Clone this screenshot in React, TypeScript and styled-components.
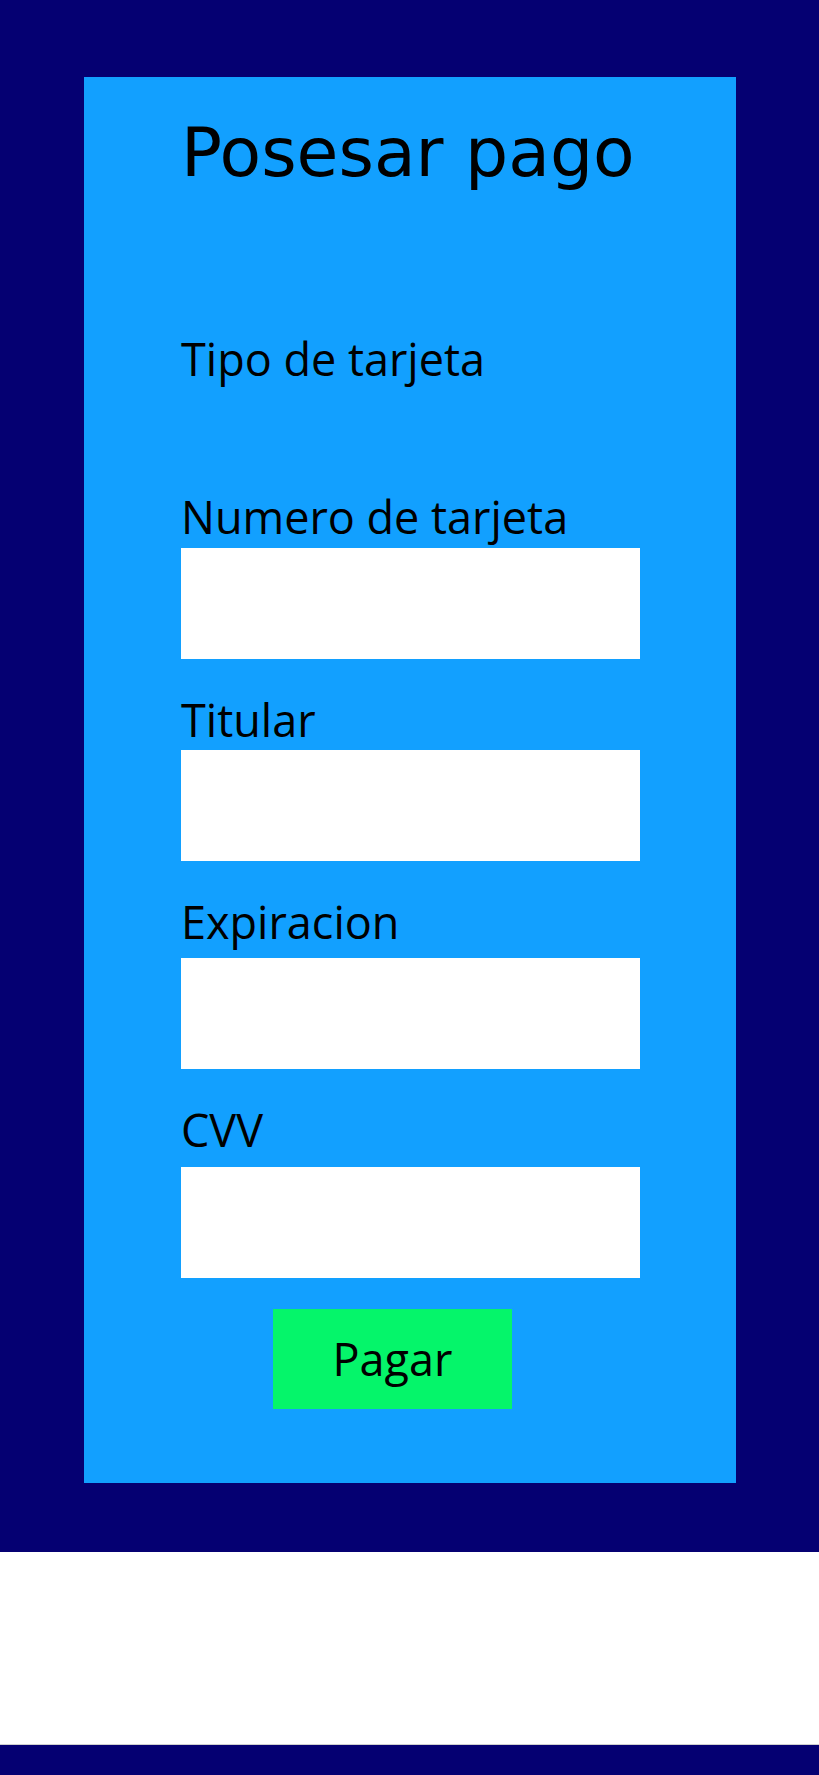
import React from "react";
import styled, { createGlobalStyle } from "styled-components";

const GlobalStyle = createGlobalStyle`
  html, body {
    margin: 0;
    padding: 0;
    background: #ffffff;
  }
  * {
    box-sizing: border-box;
  }
`;

interface GapProps {
  gap: number;
}

const fields = [
  { label: "Numero de tarjeta", gap: 7 },
  { label: "Titular", gap: 6 },
  { label: "Expiracion", gap: 12 },
  { label: "CVV", gap: 13 },
];

const App: React.FC = () => {
  return (
    <>
      <GlobalStyle />
      <Page>
        <Card>
          <Title>Posesar pago</Title>
          <CardType>Tipo de tarjeta</CardType>
          <Form>
            {fields.map((f) => (
              <Field key={f.label}>
                <Label gap={f.gap}>{f.label}</Label>
                <Input type="text" />
              </Field>
            ))}
          </Form>
          <PayBTN>Pagar</PayBTN>
        </Card>
      </Page>
      <Blank />
      <Footer />
    </>
  );
};

export default App;

const Page = styled.div`
  background-color: #050072;
  padding: 77px 0 69px;
`;

const Card = styled.div`
  width: 652px;
  height: 1406px;
  margin: 0 auto;
  background-color: #12a0ff;
  padding: 42px 0 0 97.5px;
  display: flex;
  flex-direction: column;
  align-items: flex-start;
`;

const Title = styled.h1`
  margin: 0;
  font-family: "DejaVu Sans", sans-serif;
  font-weight: normal;
  font-size: 68px;
  line-height: 68px;
  color: #000;
`;

const labelFont = `
  font-family: "Open Sans", "Noto Sans", sans-serif;
  font-size: 45px;
  line-height: 48px;
  color: #000;
`;

const CardType = styled.div`
  ${labelFont}
  margin-top: 148px;
`;

const Form = styled.div`
  margin-top: 110px;
  display: flex;
  flex-direction: column;
  gap: 37px;
`;

const Field = styled.div`
  display: flex;
  flex-direction: column;
`;

const Label = styled.label<GapProps>`
  ${labelFont}
  margin-bottom: ${(p) => p.gap}px;
`;

const Input = styled.input`
  width: 459px;
  height: 111px;
  border: none;
  outline: none;
  background-color: #ffffff;
  padding: 0 16px;
  font-size: 24px;
`;

const PayBTN = styled.button`
  margin: 31px 0 0 92px;
  width: 239px;
  height: 100px;
  border: none;
  background-color: #05f56a;
  ${labelFont}
  padding: 0;
  cursor: pointer;
`;

const Blank = styled.div`
  height: 193px;
  background-color: #ffffff;
  border-bottom: 1px solid #cfcfcf;
`;

const Footer = styled.div`
  height: 60px;
  background-color: #050072;
`;
